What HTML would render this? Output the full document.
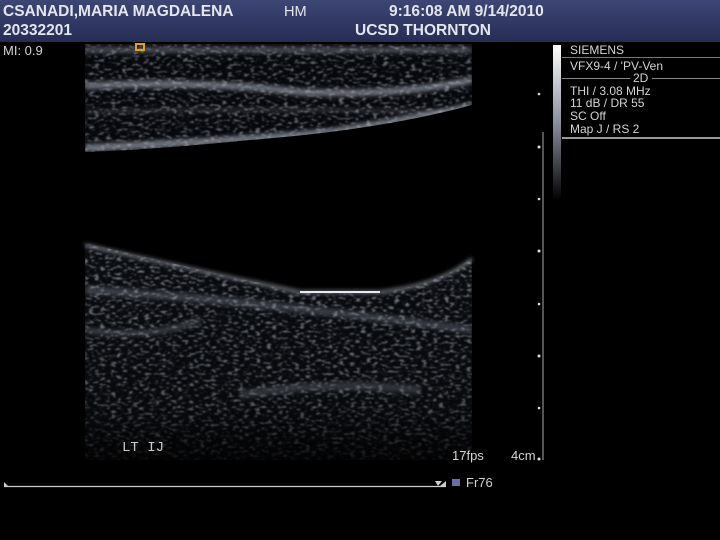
<!DOCTYPE html>
<html><head><meta charset="utf-8"><style>
html,body{margin:0;padding:0;background:#000;width:720px;height:540px;overflow:hidden;position:relative;font-family:"Liberation Sans",sans-serif}
#hdr{position:absolute;left:0;top:0;width:720px;height:42px;background:linear-gradient(#3d4674,#262d55)}
.t{position:absolute;color:#e4e6ee;font-weight:bold;font-size:16px;white-space:nowrap;transform:scaleX(.97);transform-origin:left}
.p{position:absolute;color:#d4d4d4;font-size:12px;white-space:nowrap;line-height:13px}
</style></head><body>
<div id="hdr"></div>
<div class="t" style="left:3px;top:3px">CSANADI,MARIA MAGDALENA</div>
<div class="t" style="left:284px;top:3px;font-weight:normal;font-size:15px">HM</div>
<div class="t" style="left:389px;top:3px">9:16:08 AM 9/14/2010</div>
<div class="t" style="left:3px;top:22px">20332201</div>
<div class="t" style="left:355px;top:22px">UCSD THORNTON</div>
<svg width="720" height="498" style="position:absolute;left:0;top:42px" viewBox="0 42 720 498">
<defs>
<filter id="sp" x="0" y="0" width="1" height="1">
<feTurbulence type="fractalNoise" baseFrequency="0.18 0.45" numOctaves="2" seed="3"/>
<feColorMatrix values="0 0 0 0 0.72  0 0 0 0 0.77  0 0 0 0 0.86  0 0 0 6 -3.3"/>
<feGaussianBlur stdDeviation="0.7"/>
</filter>
<filter id="bl"><feGaussianBlur stdDeviation="2"/></filter>
<clipPath id="lower"><path d="M85 243 Q200 270 300 292 L380 292 Q440 285 472 257 L472 460 L85 460Z"/></clipPath>
<clipPath id="upper"><path d="M85 44 L472 44 L472 105 Q380 130 250 140 Q150 150 85 152Z"/></clipPath>
<linearGradient id="fade" x1="0" y1="0" x2="0" y2="1"><stop offset="0" stop-color="#000" stop-opacity="0"/><stop offset=".75" stop-color="#000" stop-opacity=".25"/><stop offset="1" stop-color="#000" stop-opacity=".85"/></linearGradient>
<linearGradient id="gb" x1="0" y1="0" x2="0" y2="1"><stop offset="0" stop-color="#fff"/><stop offset=".5" stop-color="#8a909c"/><stop offset="1" stop-color="#000"/></linearGradient>
</defs>
<g clip-path="url(#upper)">
<rect x="85" y="44" width="387" height="110" fill="#07080c"/>
<rect x="85" y="44" width="387" height="110" filter="url(#sp)" opacity=".45"/>
<g filter="url(#bl)" fill="none" stroke="#b8c0cc">
<path d="M85 50 L472 50" stroke-width="6" opacity=".35"/>
<path d="M85 86 Q200 80 300 92 Q400 96 472 80" stroke-width="7" opacity=".55"/>
<path d="M85 112 Q250 108 472 112" stroke-width="3" opacity=".25"/>
<path d="M85 148 Q250 140 330 132 Q420 118 472 106" stroke-width="7" opacity=".6"/>
</g>
</g>
<g clip-path="url(#lower)">
<rect x="85" y="240" width="387" height="222" fill="#0a0c10"/>
<rect x="85" y="240" width="387" height="222" filter="url(#sp)" opacity=".55"/>
<g filter="url(#bl)" fill="none" stroke="#a0a8b6" opacity=".35">
<path d="M85 290 Q250 300 472 330" stroke-width="8"/>
<path d="M240 395 Q330 380 420 390" stroke-width="8"/>
<path d="M85 330 Q150 340 200 320" stroke-width="6"/>
</g>
<rect x="85" y="240" width="387" height="222" fill="url(#fade)"/>
</g>
<path d="M85 245 Q200 271 300 292 L380 292 Q440 285 472 259" fill="none" stroke="#c8ced8" stroke-width="2.5" opacity=".7" filter="url(#bl)"/>
<path d="M300 292 L380 292" stroke="#e8ebf0" stroke-width="2"/>
<rect x="136" y="44" width="8" height="6" fill="none" stroke="#e0a020" stroke-width="2"/>
<line x1="543" y1="132" x2="543" y2="460" stroke="#aaa" stroke-width="1"/>
<g fill="#ddd"><circle cx="539" cy="94" r="1.3"/><circle cx="539" cy="147" r="1.5"/><circle cx="539" cy="199" r="1.3"/><circle cx="539" cy="251" r="1.5"/><circle cx="539" cy="304" r="1.3"/><circle cx="539" cy="356" r="1.5"/><circle cx="539" cy="408" r="1.3"/><circle cx="539" cy="459" r="1.5"/></g>
<rect x="553" y="45" width="8" height="155" fill="url(#gb)"/>
<line x1="562" y1="57.5" x2="720" y2="57.5" stroke="#777"/>
<line x1="562" y1="78.5" x2="630" y2="78.5" stroke="#888"/>
<line x1="652" y1="78.5" x2="720" y2="78.5" stroke="#888"/>
<line x1="562" y1="138" x2="720" y2="138" stroke="#ccc" stroke-width="1.5"/>
<line x1="4" y1="486.5" x2="446" y2="486.5" stroke="#ccc" stroke-width="1.2"/>
<path d="M4 482 L4 487 L9 487Z" fill="#ccc"/>
<path d="M435 481 L442 481 L438 486Z M440 486 L446 481 L446 486Z" fill="#ccc"/>
<rect x="452" y="479" width="8" height="7" fill="#6a6ea8"/>
</svg>
<div class="p" style="left:3px;top:44px;font-size:13px">MI: 0.9</div>
<div class="p" style="left:570px;top:44px">SIEMENS</div>
<div class="p" style="left:570px;top:60px">VFX9-4 / 'PV-Ven</div>
<div class="p" style="left:633px;top:72px">2D</div>
<div class="p" style="left:570px;top:85px">THI / 3.08 MHz</div>
<div class="p" style="left:570px;top:97px">11 dB / DR 55</div>
<div class="p" style="left:570px;top:110px">SC Off</div>
<div class="p" style="left:570px;top:123px">Map J / RS 2</div>
<div class="p" style="left:122px;top:442px;font-family:'Liberation Mono',monospace;font-size:14px;color:#ccc">LT IJ</div>
<div class="p" style="left:452px;top:449px;font-size:13px">17fps</div>
<div class="p" style="left:511px;top:449px;font-size:13px">4cm</div>
<div class="p" style="left:466px;top:476px;font-size:13px">Fr76</div>
</body></html>
